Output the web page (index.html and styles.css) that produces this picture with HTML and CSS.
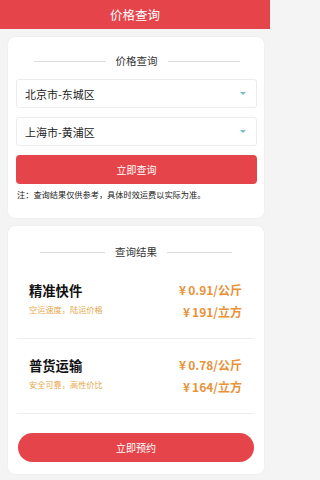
FILE: index.html
```html
<!DOCTYPE html>
<html lang="zh">
<head>
<meta charset="utf-8">
<link rel="stylesheet" href="styles.css">
</head>
<body>
<header class="topbar">价格查询</header>
<main class="page">
  <section class="card query">
    <div class="title t1"><span class="line"></span><span class="ttext">价格查询</span><span class="line"></span></div>
    <div class="select"><span>北京市-东城区</span><span class="caret"></span></div>
    <div class="select"><span>上海市-黄浦区</span><span class="caret"></span></div>
    <button class="btn">立即查询</button>
    <p class="note">注：查询结果仅供参考，具体时效运费以实际为准。</p>
  </section>
  <section class="card result">
    <div class="title t2"><span class="line"></span><span class="ttext">查询结果</span><span class="line"></span></div>
    <div class="row">
      <div class="info">
        <div class="name">精准快件</div>
        <div class="sub">空运速度，陆运价格</div>
      </div>
      <div class="prices">
        <div class="price"><span class="yen">¥</span>0.91/公斤</div>
        <div class="price"><span class="yen">¥</span>191/立方</div>
      </div>
    </div>
    <div class="row">
      <div class="info">
        <div class="name">普货运输</div>
        <div class="sub">安全可靠，高性价比</div>
      </div>
      <div class="prices">
        <div class="price"><span class="yen">¥</span>0.78/公斤</div>
        <div class="price"><span class="yen">¥</span>164/立方</div>
      </div>
    </div>
    <button class="btn round">立即预约</button>
  </section>
</main>
</body>
</html>
```
FILE: styles.css
```css
* { box-sizing: border-box; }
html, body {
  margin: 0;
  padding: 0;
  background: #f4f4f4;
  font-family: "Noto Sans CJK SC", "Noto Sans", sans-serif;
  width: 270px;
  height: 480px;
  overflow: hidden;
}
.topbar {
  height: 29px;
  background: #e5454a;
  color: #fff;
  font-size: 12.5px;
  line-height: 29px;
  text-align: center;
}
.page {
  padding: 8px 6px 0 8px;
  display: flex;
  flex-direction: column;
  gap: 8px;
}
.card {
  background: #fff;
  border-radius: 7px;
  box-shadow: 0 0 2px rgba(0,0,0,0.07);
}
.query {
  height: 181px;
  padding: 18px 7px 0 8px;
}
.result {
  height: 248px;
  padding: 20px 9px 0 9px;
}
.title {
  display: flex;
  align-items: center;
  justify-content: center;
  gap: 10px;
  height: 12px;
}
.ttext {
  font-size: 10.5px;
  line-height: 12px;
  color: #333;
}
.line {
  height: 1px;
  background: #dcdcdc;
}
.t1 .line { width: 72px; }
.t2 .line { width: 65px; }
.t1 { margin-bottom: 12px; }
.t2 { margin-bottom: 6px; }
.select {
  height: 29px;
  border: 1px solid #ececec;
  border-radius: 3px;
  display: flex;
  align-items: center;
  justify-content: space-between;
  padding: 0 10px 0 8px;
  font-size: 11px;
  color: #222;
  margin-bottom: 9px;
}
.caret {
  width: 0;
  height: 0;
  border-left: 3px solid transparent;
  border-right: 3px solid transparent;
  border-top: 3px solid #6fc2c0;
}
.btn {
  display: block;
  width: 100%;
  height: 29px;
  border: none;
  border-radius: 4px;
  background: #e5454a;
  color: #fff;
  font-family: inherit;
  font-size: 10px;
  padding: 0;
}
.note {
  margin: 4px 0 0 1px;
  font-size: 8.2px;
  line-height: 12px;
  color: #222;
}
.row {
  height: 75px;
  border-bottom: 1px solid #eeeeee;
  margin: 0 2px 0 0;
  display: flex;
  align-items: flex-start;
  justify-content: space-between;
  padding: 19px 11px 0 12px;
}
.info {
  display: flex;
  flex-direction: column;
  gap: 5px;
}
.name {
  font-size: 13.3px;
  font-weight: 700;
  color: #111;
  line-height: 16px;
}
.sub {
  font-size: 8.2px;
  color: #e6a94f;
  line-height: 10px;
}
.prices {
  display: flex;
  flex-direction: column;
  align-items: flex-end;
  gap: 8px;
}
.price {
  font-size: 12px;
  font-weight: 700;
  color: #e8923a;
  line-height: 14px;
}
.yen {
  margin-right: 2px;
}
.round {
  margin: 19px 0 0 1px;
  width: 236px;
  border-radius: 15px;
}
```
